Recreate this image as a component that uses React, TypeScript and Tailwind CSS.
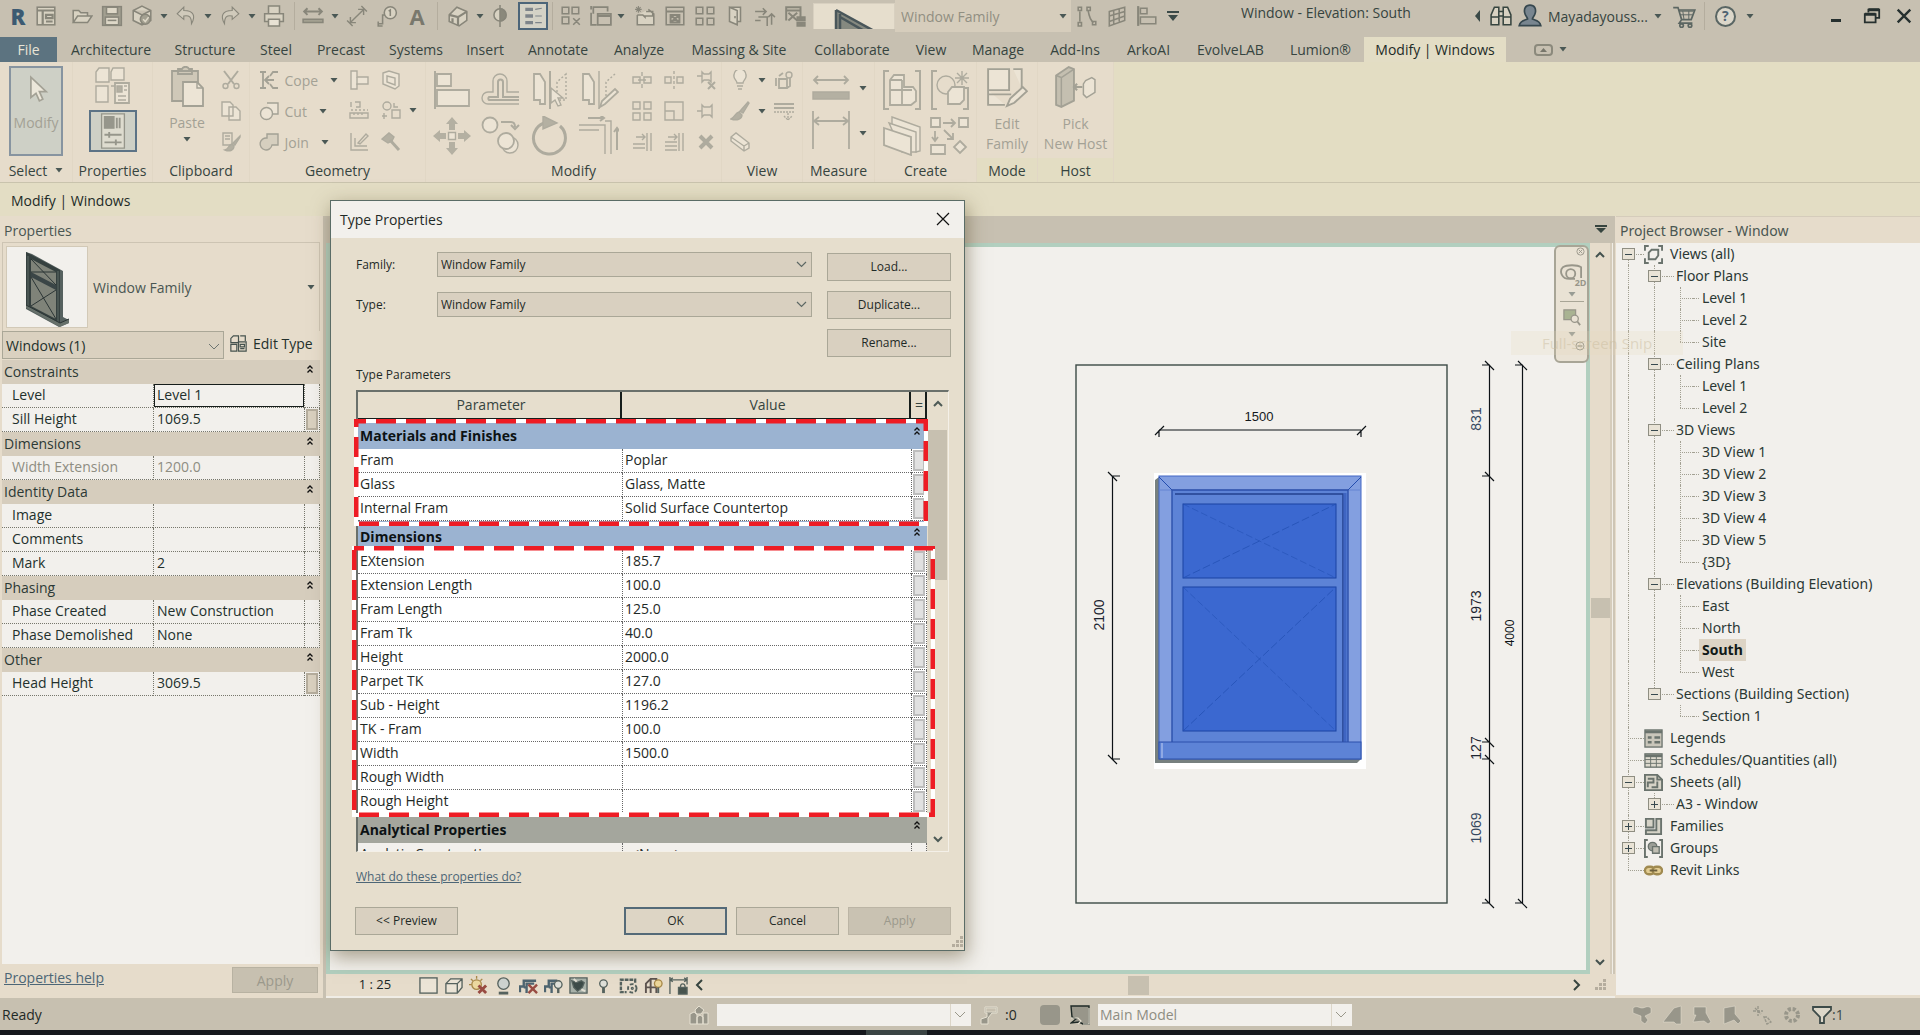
import React from "react";

type Kids = { children?: React.ReactNode };

/* ---------- small drawing helpers ---------- */

function Ico({ s = 20, v = 20, c = "", children }: { s?: number; v?: number; c?: string } & Kids) {
  return (
    <svg
      width={s}
      height={s}
      viewBox={`0 0 ${v} ${v}`}
      className={`shrink-0 ${c}`}
      fill="none"
      stroke="currentColor"
      strokeWidth={1.4}
      aria-hidden="true"
    >
      {children}
    </svg>
  );
}

function Caret({ c = "" }: { c?: string }) {
  return (
    <svg width="8" height="5" viewBox="0 0 8 5" className={`shrink-0 ${c}`} aria-hidden="true">
      <path d="M0.500 0h7L4 4.500z" fill="#4a5855" />
    </svg>
  );
}

function Chevron({ dir, c = "" }: { dir: "up" | "down" | "left" | "right"; c?: string }) {
  const d = { up: "M3 8l4-4 4 4", down: "M3 4l4 4 4-4", left: "M9 1L4 6l5 5", right: "M5 1l5 5-5 5" }[dir];
  return (
    <svg width="14" height="12" viewBox="0 0 14 12" className={`shrink-0 ${c}`} aria-hidden="true">
      <path d={d} fill="none" stroke="currentColor" strokeWidth="2" />
    </svg>
  );
}

function DoubleUp() {
  return (
    <svg width="8" height="10" viewBox="0 0 8 10" className="shrink-0" aria-hidden="true">
      <path d="M1.500 4.500L4 2l2.500 2.500M1.500 8.500L4 6l2.500 2.500" fill="none" stroke="#111" strokeWidth="1.3" />
    </svg>
  );
}

function Grip() {
  return (
    <svg width="12" height="12" viewBox="0 0 12 12" aria-hidden="true">
      <path d="M8 0h3v3H8zM4 4h3v3H4zM8 4h3v3H8zM0 8h3v3H0zM4 8h3v3H4zM8 8h3v3H8z" fill="#b5ad9e" />
    </svg>
  );
}

function WindowModel() {
  return (
    <svg width="80" height="80" viewBox="0 0 80 80" aria-hidden="true">
      <path d="M19 5l6 2 31 17v46l6 3v3l-10 4-33-18z" fill="#56615f" />
      <path d="M19 5l34 18v56L19 61z" fill="#35403f" />
      <path d="M24 12l25 13v47L24 59z" fill="#7f8379" />
      <path d="M21 9v50M51 24v52" stroke="#5f6a67" strokeWidth="1" />
      <path d="M24 25l25 13v5L24 30z" fill="#3a4546" />
      <path d="M24 12l25 26M24 25l25 0M24 30l25 42M24 59l25-16" stroke="#2b3535" strokeWidth="1" />
      <path d="M19 58l34 18 9-4v4l-9 4-34-19z" fill="#66706a" />
      <path d="M19 58l34 18 9-4" fill="none" stroke="#2b3535" strokeWidth="1" />
    </svg>
  );
}

/* ---------- quick access toolbar ---------- */

const P = {
  list: <><rect x="2" y="2" width="16" height="16" fill="#d8d2c2" /><path d="M2 5h16M7 5v13M10 9h6v3h-6zM10 15h6" strokeWidth="2" /></>,
  folder: <path d="M2 16V5h5l2 2h6v3M2 16l4-6h13l-4 6z" fill="#d8d2c2" />,
  save: <><rect x="1.500" y="1.500" width="17" height="17" fill="#a3a091" /><rect x="5" y="2" width="10" height="6" fill="#ded8c8" /><rect x="4" y="11" width="12" height="7" fill="#ded8c8" /><path d="M6 14h8" /></>,
  sync: <><path d="M10 1l8 4v9l-8 4-8-4V5zM2 5l8 4 8-4M10 9v9" fill="#d8d2c2" /><circle cx="13" cy="13" r="4.500" fill="#a3a091" /><path d="M11 13l2 2 3-4" stroke="#ded8c8" /></>,
  undo: <path d="M8 2L2 8l6 5v-3c5-1 7 1 7 7 4-7 2-12-7-12z" fill="#d0cabb" strokeWidth="1" />,
  redo: <path d="M12 2l6 6-6 5v-3c-5-1-7 1-7 7-4-7-2-12 7-12z" fill="#d0cabb" strokeWidth="1" />,
  print: <><path d="M5 8V1h10v7M1.500 8h17v7h-17z" fill="#d8d2c2" /><path d="M5 13h10v6H5z" fill="#e8e2d4" /></>,
  ruler: <><path d="M2 6h16M5 3L2 6l3 3M15 3l3 3-3 3" strokeWidth="1.800" /><path d="M1 13h18v3H1z" fill="#a3a091" /></>,
  dim: <path d="M4 16L16 4M4 11v5h5M11 4h5v5M1 14l5 5M14 1l5 5" strokeWidth="1.300" />,
  tag: <><circle cx="13" cy="7" r="5.500" fill="#d8d2c2" /><path d="M11.500 5.500L13 4.500V10M2 17h4V9h2M2 15v4h4" /></>,
  home: <><path d="M2 9l7-7 9 4v8l-7 5-9-4z" fill="#d8d2c2" /><path d="M2 9l8 2 8-5M10 11v8M5 12v4" strokeWidth="2" /></>,
  section: <><circle cx="10" cy="9" r="5.500" fill="#d8d2c2" /><path d="M10 3.500V0M10 14.500V20M10 3.500a5.500 5.500 0 010 11z" fill="#8b897c" /></>,
  thin: <path d="M3 4h7M3 10h7M3 16h7" strokeWidth="3" />,
  closeh: <path d="M2 2h6v6H2zM11 2h6v6h-6zM2 11h6v6H2zM12 12l6 6M18 12l-6 6" />,
  sw: <path d="M3 8V2h13v4M1 7v11h5M7 8h12v10H7zM7 10h12M1 4v-3" strokeWidth="1.600" />,
  newf: <><path d="M3 9h5l2 2v-1h7V6h-6M3 9v9h15V8l-5-4" fill="#d8d2c2" /><path d="M4 1v6M1 4h6M2 2l4 4M6 2L2 6" strokeWidth="1" /></>,
  win: <><path d="M2 2h16v16H2z" /><path d="M2 6h16M6 9l8 7M14 9l-8 7M6 9h8v7H6z" strokeWidth="1.800" /></>,
  grid4: <path d="M2 2h6v6H2zM12 2h6v6h-6zM2 12h6v6H2zM12 12h6v6h-6z" />,
  door: <path d="M5 2l7 3v13l-7-3zM5 2h10v13h-3M10 10v2" fill="#d8d2c2" />,
  trimq: <path d="M1 6h10M8 3l3 3-3 3M4 11h8v8M16 18V8M13 11l3-3 3 3M1 14h5" />,
  winq: <><path d="M2 14V2h13v9M2 5h13M4 7l8 7M12 7l-8 7" strokeWidth="1.800" /><path d="M12 11h3v3h-3zM16 11h3v3h-3zM12 16h3v3h-3zM16 16h3v3h-3z" fill="#8b897c" /></>,
  node: <path d="M2 2h3v3H2zM10 2h3v3h-3zM15 15h3v3h-3zM2 16h3v3H2zM3.500 6v9M11 5c1 6 2 9 5 11" />,
  curtain: <path d="M3 6l14-4v12L3 19zM7 5v12M12 3.500V15M3 10l14-4M3 15l14-5" />,
  alignq: <><path d="M2 1v18" strokeWidth="2" /><path d="M4 3h6v5H4zM4 11h14v6H4z" /></>,
};

function QBtn({ k, label, ml = "ml-1.5" }: { k: keyof typeof P; label: string; ml?: string }) {
  return (
    <button aria-label={label} className={`flex w-6 shrink-0 items-center justify-center ${ml} text-[#88867a]`}>
      <Ico s={22}>{P[k]}</Ico>
    </button>
  );
}

const Sep = ({ c }: { c: string }) => <span className={`h-7 w-px shrink-0 bg-[#b4ad9e] ${c}`} />;

function TitleBar() {
  return (
    <header className="flex h-[37px] shrink-0 items-start text-[14px] text-[#36443f]">
      <div className="flex h-8 min-w-0 flex-1 items-center">
        <span className="ml-1.5 w-6 shrink-0 text-center text-[22px] leading-8 font-black text-[#3c5a72]">R</span>
        <QBtn k="list" label="Home" ml="ml-1" />
        <QBtn k="folder" label="Open" ml="ml-3" />
        <QBtn k="save" label="Save" />
        <QBtn k="sync" label="Synchronize" />
        <Caret c="ml-1.5" />
        <QBtn k="undo" label="Undo" />
        <Caret c="ml-1.5" />
        <QBtn k="redo" label="Redo" />
        <Caret c="ml-1.5" />
        <QBtn k="print" label="Print" />
        <Sep c="ml-2" />
        <QBtn k="ruler" label="Measure" />
        <Caret c="ml-1.5" />
        <QBtn k="dim" label="Aligned dimension" />
        <QBtn k="tag" label="Tag" />
        <button className="ml-1.5 w-6 shrink-0 text-center text-[22px] leading-7 font-bold text-[#79786d]">A</button>
        <Sep c="ml-2" />
        <QBtn k="home" label="Default 3D view" ml="ml-2" />
        <Caret c="ml-1.5" />
        <QBtn k="section" label="Section" ml="ml-1" />
        <button
          aria-label="Thin lines"
          className="ml-1.5 flex h-7 w-[30px] shrink-0 items-center justify-center border-2 border-[#4c6579] bg-[#d4d2c6] text-[#7d848a]"
        >
          <Ico s={22}>{P.thin}<path d="M12 4l6-1M12 10h6M12 16h6" strokeWidth="1" /></Ico>
        </button>
        <Sep c="ml-1" />
        <QBtn k="closeh" label="Close inactive" />
        <QBtn k="sw" label="Switch windows" />
        <Caret c="ml-1" />
        <QBtn k="newf" label="New family" ml="ml-2" />
        <QBtn k="win" label="Window" />
        <QBtn k="grid4" label="Array" />
        <QBtn k="door" label="Door" />
        <QBtn k="trimq" label="Trim" />
        <QBtn k="winq" label="Window type" />
        <span className="ml-1.5 flex h-[26px] w-[82px] shrink-0 justify-center overflow-hidden border-x border-t border-[#d8d0c0] bg-[#e6decd]">
          <svg width="44" height="24" viewBox="0 0 44 24" className="mt-1" aria-hidden="true">
            <path d="M4 2l40 22H4z" fill="#858980" />
            <path d="M4 2v22M4 2l40 22M8 6v18M8 9l26 15" stroke="#49565a" strokeWidth="2.500" />
          </svg>
        </span>
        <label className="relative flex h-8 w-44 shrink-0 items-center bg-[#d6cdbc]">
          <select aria-label="Family type" className="h-full w-full appearance-none bg-transparent pl-1.5 text-[14px] text-[#918f82]" defaultValue="w">
            <option value="w">Window Family</option>
          </select>
          <Caret c="absolute right-1" />
        </label>
        <QBtn k="node" label="Edit profile" ml="ml-1" />
        <QBtn k="curtain" label="Curtain grid" />
        <QBtn k="alignq" label="Align" />
        <svg width="12" height="10" viewBox="0 0 12 10" className="ml-2 shrink-0" aria-hidden="true">
          <path d="M0 0h12v2H0zM1 4h10L6 10z" fill="#3b4a48" />
        </svg>
      </div>
      <h1 className="h-7 w-[234px] shrink-0 text-[14px] leading-[26px] whitespace-nowrap">Window - Elevation: South</h1>
      <div className="flex h-8 w-[445px] shrink-0 items-center">
        <button aria-label="Collapse search" className="shrink-0">
          <svg width="5" height="12" viewBox="0 0 5 12"><path d="M5 0v12L0 6z" fill="#3b4a48" /></svg>
        </button>
        <button aria-label="Search" className="ml-2.5 text-[#36443f]">
          <Ico s={22}>
            <path d="M1 9l3-7h4v16H1zM19 9l-3-7h-4v16h7zM8 6h4v4H8zM1 11h7M12 11h7" fill="#d8d2c2" />
          </Ico>
        </button>
        <button className="ml-1.5 flex items-center gap-1.5">
          <Ico s={24} c="text-[#36474e]">
            <path d="M10 1c4 0 5 3 4.500 6S12 11 12 12.500c2 1 6 1 7 5.500H1c1-4.500 5-4.500 7-5.500C8 11 6 10 5.500 7S6 1 10 1z" fill="#78858f" />
          </Ico>
          <span>Mayadayouss...</span>
        </button>
        <Caret c="ml-1.5" />
        <button aria-label="Cart" className="ml-2.5 text-[#5c6662]">
          <Ico s={24}>
            <path d="M1 3h4l3 10h8l3-8H6M8 13l-2 3h11" />
            <path d="M6 6h12M7 9h10M9 6l1 7M14 6v7" strokeWidth="0.800" />
            <circle cx="8" cy="18" r="1.500" /><circle cx="15" cy="18" r="1.500" />
          </Ico>
        </button>
        <Sep c="ml-2" />
        <button aria-label="Help" className="ml-2.5 flex size-[21px] shrink-0 items-center justify-center rounded-full border-2 border-[#5a6664] bg-[#dcd7ca] text-[14px] leading-4 font-bold text-[#4f6472]">
          ?
        </button>
        <Caret c="ml-2.5" />
        <span className="flex-1" />
        <button aria-label="Minimize" className="flex h-5 w-4 items-end pb-1"><span className="h-[3px] w-2.5 bg-[#26302f]" /></button>
        <button aria-label="Restore" className="ml-4 text-[#26302f]">
          <Ico s={18}><path d="M6 6V3h12v9h-3M2 8h12v9H2z" strokeWidth="2" /><path d="M6 3h12M2 8h12" strokeWidth="3.500" /></Ico>
        </button>
        <button aria-label="Close" className="mr-[7px] ml-3.5 text-[#26302f]">
          <Ico s={18}><path d="M3 3l14 14M17 3L3 17" strokeWidth="2.600" /></Ico>
        </button>
      </div>
    </header>
  );
}

/* ---------- ribbon ---------- */

const TABS: [string, string][] = [
  ["Architecture", "w-[104px]"], ["Structure", "w-[84px]"], ["Steel", "w-[58px]"], ["Precast", "w-[72px]"],
  ["Systems", "w-[78px]"], ["Insert", "w-[60px]"], ["Annotate", "w-[86px]"], ["Analyze", "w-[76px]"],
  ["Massing & Site", "w-[124px]"], ["Collaborate", "w-[102px]"], ["View", "w-[56px]"], ["Manage", "w-[78px]"],
  ["Add-Ins", "w-[76px]"], ["ArkoAI", "w-[71px]"], ["EvolveLAB", "w-[93px]"], ["Lumion®", "w-[87px]"],
];

function Tabs() {
  return (
    <nav className="flex h-[25px] shrink-0 items-stretch text-[14px] leading-[25px] whitespace-nowrap text-[#36443f]">
      <button className="w-[57px] bg-[#5c7380] text-[#e9e4d6]">File</button>
      <span className="w-0.5" />
      {TABS.map(([t, w]) => (
        <button key={t} className={`${w} shrink-0`}>{t}</button>
      ))}
      <button className="w-[142px] shrink-0 bg-[#e3ddc5] text-[#1d2b27]">Modify | Windows</button>
      <button aria-label="Ribbon display" className="ml-7 flex items-center gap-1.5">
        <span className="flex h-3 w-[19px] items-center justify-center rounded border-2 border-[#8b897c]">
          <svg width="7" height="4" viewBox="0 0 7 4"><path d="M0 4h7L3.500 0z" fill="#77766b" /></svg>
        </span>
        <Caret />
      </button>
    </nav>
  );
}

function Panel({ w, label, tint, children }: { w: string; label: React.ReactNode; tint?: boolean } & Kids) {
  return (
    <section className={`flex shrink-0 flex-col border-r border-[#e1d7c5] bg-[#e6dccb] ${w}`}>
      <div className="flex h-24 justify-center pt-1">{children}</div>
      <h2 className={`flex h-6 items-center justify-center text-[14px] text-[#36443f] ${tint ? "bg-[#e3ddc3]" : ""}`}>{label}</h2>
    </section>
  );
}

function Stack({ w = "w-5", gap = "gap-[11px]", children }: { w?: string; gap?: string } & Kids) {
  return <div className={`flex shrink-0 flex-col items-center pt-1 ${gap} ${w}`}>{children}</div>;
}

function Tool({ label, big, children }: { label: string; big?: boolean } & Kids) {
  return (
    <button aria-label={label} className="shrink-0 text-[#aeab9e]">
      <Ico s={big ? 40 : 20} v={big ? 40 : 20}>{children}</Ico>
    </button>
  );
}

function TextTool({ label, children }: { label: string } & Kids) {
  return (
    <button className="flex h-5 items-center text-[14px] text-[#a3a195]">
      <Ico>{children}</Ico>
      <span className="mr-3 ml-1.5">{label}</span>
      <Caret />
    </button>
  );
}

const F = "#ece4d5";
const G = "#b4b0a2";

function Ribbon() {
  return (
    <div className="flex h-[121px] shrink-0 overflow-hidden border-b border-[#c9c3ad] bg-[#e3ddc3]">
      <Panel w="w-[73px]" label={<>Select <Caret c="ml-2" /></>}>
        <button className="flex h-[90px] w-[54px] flex-col items-center border-2 border-[#8794a0] bg-[#ced0c6] pt-1 text-[14px] text-[#a3a195]">
          <Ico s={34}><path d="M7 3v12l3-2.500 2 4.500 2-1-2-4.500h4z" fill="#ece7da" strokeWidth="1" /></Ico>
          <span className="mt-1.5">Modify</span>
        </button>
      </Panel>
      <Panel w="w-20" label="Properties">
        <div className="flex flex-col items-center gap-1">
          <Tool label="Type properties" big>
            <path d="M6 2h10v14H3V6zM20 2h11v12H18V6zM3 20h12v16H3zM16 16v-4M18 20h6" fill={F} />
            <path d="M22 17h14v20H22z" fill={F} strokeWidth="1.800" />
            <path d="M24 20h5v6h-5z" fill={G} /><path d="M31 20h3M31 24h3M25 30h8M25 34h8" />
          </Tool>
          <button aria-label="Properties palette" className="flex h-[42px] w-12 items-center justify-center border-2 border-[#5c7386] bg-[#ced0c6] text-[#96968b]">
            <Ico s={38} v={40}>
              <path d="M8 2h24v36H8z" fill="#dedccf" />
              <path d="M11 5h10v12H11z" fill="#96968b" />
              <path d="M24 6v11M27 6v11M11 24h18M16 21v6M11 32h18M23 29v6" strokeWidth="2" />
            </Ico>
          </button>
        </div>
      </Panel>
      <Panel w="w-[97px]" label="Clipboard">
        <span className="w-1.5" />
        <button className="flex w-10 flex-col items-center text-[14px] text-[#a3a195]">
          <Ico s={42} v={42}>
            <path d="M6 5h26v30H6zM12 8V3h4c1-3 6-3 7 0h3v5z" fill="#cfc8b8" strokeWidth="1.800" />
            <path d="M17 16h14l6 6v18H17z" fill={F} strokeWidth="1.800" /><path d="M31 16v6h6" />
          </Ico>
          <span className="mt-1">Paste</span>
          <Caret c="mt-1" />
        </button>
        <span className="w-3.5" />
        <Stack>
          <Tool label="Cut"><path d="M3 1l10 13M17 1L7 14" strokeWidth="2" /><circle cx="4.500" cy="16" r="2.500" /><circle cx="15.500" cy="16" r="2.500" /></Tool>
          <Tool label="Copy"><path d="M1 1h8l3 3v11H1zM8 6h7l4 4v9H8z" fill={F} /></Tool>
          <Tool label="Match type"><path d="M2 1h9v12H2zM4 4h5M4 7h5" /><path d="M19 4l-7 7 2 2 5-8zM11 12c-4 1-3 5-7 6 5 2 9 0 9-4z" fill={G} /></Tool>
        </Stack>
      </Panel>
      <Panel w="w-44" label="Geometry">
        <div className="flex w-[90px] flex-col gap-[11px] pt-1">
          <TextTool label="Cope"><path d="M1 2h6M4 2v16M1 18h6M7 10h8M10 6l-4 4 4 4M19 2h-5l-3 4M19 18h-5l-3-4" strokeWidth="1.800" /></TextTool>
          <TextTool label="Cut"><path d="M8 2h11v11h-5" fill={F} /><circle cx="7.500" cy="12.500" r="6" fill={F} /></TextTool>
          <TextTool label="Join"><path d="M8 2h11v11h-6a6 6 0 11-5-7z" fill="#d6cfbf" /></TextTool>
        </div>
        <Stack>
          <Tool label="Wall joins"><path d="M2 1h6v6h11v7H8v5H2z" fill={F} /><path d="M8 7v8" /></Tool>
          <Tool label="Split face"><path d="M2 1v5M6 1h5v5H7M1 12h18v5H1zM5 12v2M9 12v2M13 12v2" /><path d="M2 9h17" strokeDasharray="2 2" /></Tool>
          <Tool label="Demolish lines"><path d="M2 1v17h17M6 6v8h12M9 11l8-9 2 2-8 8z" /></Tool>
        </Stack>
        <span className="w-3" />
        <Stack>
          <Tool label="Paint"><path d="M2 3l6-2 10 3v12l-4 3L2 14zM6 6l8 2v7l-8-3z" fill={F} /></Tool>
          <Tool label="Switch geometry"><circle cx="6" cy="5" r="4" /><path d="M11 9h8v8h-8zM3 12v6M1 15h5M13 2v4h4" /></Tool>
          <Tool label="Hammer"><path d="M1 7l7-6 5 4-2 4-4 2z" fill={G} /><path d="M9 8l9 10" strokeWidth="3" /></Tool>
        </Stack>
        <Caret c="mt-[42px] ml-2" />
      </Panel>
      <Panel w="w-[296px]" label="Modify">
        <div className="grid grid-cols-[repeat(4,40px)] grid-rows-2 gap-x-[9px] gap-y-0.5 pt-0.5">
          <Tool label="Align" big><path d="M3 1v38" strokeWidth="2" /><path d="M5 4h14v12H5zM5 20h32v16H5z" fill={F} strokeWidth="1.800" /></Tool>
          <Tool label="Offset" big><path d="M38 22H26V11a6 6 0 00-14 0v11H7a5 5 0 000 12h31" /><path d="M38 27H22V12a2 2 0 00-5 0v15H8a2 2 0 000 3h30" strokeWidth="2" /></Tool>
          <Tool label="Mirror pick axis" big><path d="M4 4h6l5 8v22h-5V30H4z" fill={F} strokeWidth="1.800" /><path d="M20 1v38" strokeWidth="2" /><path d="M36 4l-9 8v22h3v-4h6z" strokeDasharray="2 2" /><path d="M21 18v15l4-3 3 6 3-1-3-7h5z" fill={F} /></Tool>
          <Tool label="Mirror draw axis" big><path d="M4 4h6l5 8v22h-5V30H4z" fill={F} strokeWidth="1.800" /><path d="M20 1v38" /><path d="M36 4l-9 8v18" strokeDasharray="2 2" /><path d="M21 37l2-6 13-12 3 3-13 12z" fill={F} strokeWidth="1.800" /></Tool>
          <Tool label="Move" big><path d="M20 1l6 7h-3v6h-6V8h-3zM20 39l6-7h-3v-6h-6v6h-3zM1 20l7-6v3h6v6H8v3zM39 20l-7-6v3h-6v6h6v3z" fill={G} stroke="none" /><path d="M16.500 16.500h7v7h-7z" fill={F} /></Tool>
          <Tool label="Copy element" big><circle cx="9" cy="9" r="7.500" fill={F} strokeWidth="1.800" /><path d="M20 6h10c3 0 4 2 4 5M30 9l4 4 4-4" strokeWidth="2" /><circle cx="29" cy="29" r="8" fill={F} /><circle cx="25" cy="25" r="8" fill={F} strokeWidth="1.800" /></Tool>
          <Tool label="Rotate" big><path d="M14 7a16 16 0 1016 3" strokeWidth="3" /><path d="M13 0l14 7-14 6z" fill={G} /></Tool>
          <Tool label="Trim" big><path d="M0 9h26v29M0 14h20M26 5h6v33" /><path d="M9 2h16M21-1l4 3-4 3M38 34V12M35 16l3-4 3 4" strokeWidth="2" /></Tool>
        </div>
        <span className="w-[13px]" />
        <div className="grid grid-cols-[repeat(3,20px)] grid-rows-[repeat(3,20px)] gap-x-3 gap-y-[11px] pt-1">
          <Tool label="Split"><path d="M1 7h7v6H1zM12 7h7v6h-7zM6 10h8M10 2v4M10 14v4" /></Tool>
          <Tool label="Split gap"><path d="M1 7h6v6H1zM13 7h6v6h-6z" /><path d="M10 1v18" strokeDasharray="3 2" /></Tool>
          <Tool label="Unpin"><path d="M1 6h5M6 2l2 2h5l2-2v10l-2-2H8l-2 2z" /><path d="M12 12l7 7M19 12l-7 7" strokeWidth="2" /></Tool>
          <Tool label="Array"><path d="M1 1h7v7H1zM12 1h7v7h-7zM1 12h7v7H1zM12 12h7v7h-7z" /></Tool>
          <Tool label="Scale"><path d="M1 1h18v18H1zM1 10h9v9" /></Tool>
          <Tool label="Pin"><path d="M1 10h5M6 4l2 2h6l2-2v12l-2-2H8l-2 2z" /></Tool>
          <Tool label="Trim single"><path d="M1 12h12M1 16h12M15 1v18M19 1v18M4 5h9M10 2l3 3-3 3" /></Tool>
          <Tool label="Trim multiple"><path d="M1 10h12M1 14h12M1 18h12M15 1v18M19 1v18M4 5h9M10 2l3 3-3 3" /></Tool>
          <Tool label="Delete"><path d="M4 4l12 12M16 4L4 16" strokeWidth="4" /></Tool>
        </div>
      </Panel>
      <Panel w="w-[81px]" label="View">
        <Stack>
          <Tool label="Hide in view"><path d="M7 13c0-3-4-4-3-8a6 6 0 0112 0c1 4-3 5-3 8zM7 16h6M8 19h4" fill={F} /></Tool>
          <Tool label="Override graphics"><path d="M18 1l-8 9 3 2 6-10zM9 11c-4 1-4 5-8 7 6 2 11 0 11-4z" fill={G} /></Tool>
          <Tool label="Selection box"><path d="M1 5l5-4 13 10v5l-5 3L1 9zM1 5l13 9v5M14 14l5-3" fill={F} /></Tool>
        </Stack>
        <div className="flex w-5 flex-col items-center pl-1"><Caret c="mt-3" /><Caret c="mt-[26px]" /></div>
        <span className="w-1" />
        <Stack>
          <Tool label="Displace"><path d="M5 9h8v9H5zM2 8v8M5 6l4-3M16 8v8l-3 2" strokeWidth="1.800" /><circle cx="15" cy="5" r="3" /></Tool>
          <Tool label="Linework"><path d="M0 3h20M0 7h20" strokeWidth="2" /><path d="M0 11h20M14 12v7M10 15l4 4 4-4" strokeDasharray="2 1" /></Tool>
        </Stack>
      </Panel>
      <Panel w="w-[72px]" label="Measure">
        <div className="flex flex-col gap-0.5 pt-0.5">
          <Tool label="Measure distance" big><path d="M3 12h34M7 8l-4 4 4 4M33 8l4 4-4 4" strokeWidth="1.800" /><path d="M2 24h36v7H2z" fill={G} /></Tool>
          <Tool label="Aligned" big><path d="M2 1v38M38 1v38M2 11h36M8 7l-5 4 5 4M32 7l5 4-5 4" strokeWidth="1.800" /></Tool>
        </div>
        <div className="ml-2 flex flex-col"><Caret c="mt-5" /><Caret c="mt-10" /></div>
      </Panel>
      <Panel w="w-[102px]" label="Create">
        <div className="grid grid-cols-[repeat(2,40px)] grid-rows-2 gap-x-2 gap-y-0.5 pt-0.5">
          <Tool label="Create assembly" big><path d="M7 1H2v38h5M33 1h5v38h-5" strokeWidth="2" /><path d="M8 10l4-5h10v12h9l3 4v10l-5 4H8zM8 20h22M20 10v24M8 10h12" fill={F} strokeWidth="1.800" /></Tool>
          <Tool label="Create group" big><path d="M7 1H2v38h5M33 18h5v21h-5" strokeWidth="2" /><circle cx="16" cy="15" r="9" /><path d="M18 22l4-5h12v13l-4 4H18z" fill={F} strokeWidth="1.800" /><path d="M32 1v14M25 8h14M27 3l10 10M37 3L27 13" /></Tool>
          <Tool label="Create parts" big><path d="M10 1l28 10v24l-4 1L10 24z" fill={F} /><path d="M7 7l27 9v20H20z" fill={F} /><path d="M2 12l27 9v18L2 29z" fill={F} strokeWidth="1.800" /></Tool>
          <Tool label="Create similar" big><path d="M1 2h9v9H1zM29 2h9v9h-9zM1 29h14v9H1zM30 25l6 6-6 6-6-6z" fill={F} strokeWidth="1.800" /><path d="M13 7h12M21 3l4 4-4 4M5 15v10M2 21l3 4 3-4M14 14l9 9M23 17v6h-6" strokeWidth="1.800" /></Tool>
        </div>
      </Panel>
      <Panel w="w-[61px]" label="Mode" tint>
        <button className="flex flex-col items-center text-[14px] leading-5 text-[#a3a195]">
          <Ico s={42} v={40}><path d="M2 3h20v20H2zM26 3h8v18M2 27h22M2 23v14h16" fill={F} strokeWidth="1.800" /><path d="M20 38l3-7 12-11 4 4-12 11z" fill={F} strokeWidth="1.800" /></Ico>
          <span className="mt-1.5">Edit</span><span>Family</span>
        </button>
      </Panel>
      <Panel w="w-[76px]" label="Host" tint>
        <button className="flex flex-col items-center text-[14px] leading-5 whitespace-nowrap text-[#a3a195]">
          <Ico s={42} v={40}><path d="M2 9L14 1l5 2v30L7 39l-5-2z" fill="#c4bfb0" strokeWidth="1.800" /><path d="M7 11l12-8M7 11v28M2 9l5 2" /><path d="M30 14l6-3 3 2v12l-8 5-3-3V17z" fill={F} /><path d="M27 20h-8M22 17l-3 3 3 3" strokeWidth="2" /></Ico>
          <span className="mt-1.5">Pick</span><span>New Host</span>
        </button>
      </Panel>
    </div>
  );
}

/* ---------- properties palette ---------- */

type PRow = { h?: string; n?: string; v?: string; btn?: boolean; off?: boolean; active?: boolean };
const PROPS: PRow[] = [
  { h: "Constraints" }, { n: "Level", v: "Level 1", active: true }, { n: "Sill Height", v: "1069.5", btn: true },
  { h: "Dimensions" }, { n: "Width Extension", v: "1200.0", off: true },
  { h: "Identity Data" }, { n: "Image", v: "" }, { n: "Comments", v: "" }, { n: "Mark", v: "2" },
  { h: "Phasing" }, { n: "Phase Created", v: "New Construction" }, { n: "Phase Demolished", v: "None" },
  { h: "Other" }, { n: "Head Height", v: "3069.5", btn: true },
];

function PropertiesPalette() {
  return (
    <aside className="flex w-[323px] shrink-0 flex-col bg-[#e6dccb] pt-0.5 pr-[3px] pl-0.5 text-[14px] text-[#23302c]">
      <h2 className="h-6 pl-0.5 leading-[26px] text-[#4a5652]">Properties</h2>
      <div className="flex h-[89px] items-center border border-b-0 border-[#cdc4b3] pl-[3px]">
        <div className="border border-[#d2c9b7] bg-[#f2f0ec]"><WindowModel /></div>
        <span className="flex-1 pl-[5px] text-[#4a5652]">Window Family</span>
        <Caret c="mr-1" />
      </div>
      <div className="flex h-[29px] items-start">
        <label className="relative h-7 w-[222px] border border-[#aaa797] bg-[#dad1c0]">
          <select aria-label="Filter" className="h-full w-full appearance-none bg-transparent pl-[3px]" defaultValue="w">
            <option value="w">Windows (1)</option>
          </select>
          <svg width="10" height="6" viewBox="0 0 10 6" className="absolute top-3 right-1"><path d="M0 0l5 5 5-5" fill="none" stroke="#6c7571" /></svg>
        </label>
        <button className="ml-1.5 flex h-6 items-center gap-1.5 whitespace-nowrap">
          <Ico s={17} c="text-[#46534f]"><path d="M4 1h6v8H1V4zM12 1h6v6M1 11h7v8H1zM10 4v5" /><path d="M10 8h9v11h-9zM12 11h5v3h-5zM12 16h5" /></Ico>
          Edit Type
        </button>
      </div>
      <table className="w-full table-fixed border-separate border-spacing-0">
        <colgroup><col /><col className="w-[151px]" /><col className="w-4" /></colgroup>
        <tbody>
          {PROPS.map((r, i) =>
            r.h ? (
              <tr key={i} className="h-6 bg-[#d6cdbd]">
                <th colSpan={2} className="pl-0.5 text-left leading-6 font-normal text-[#2c3935]">{r.h}</th>
                <td className="align-top"><button aria-label={`Collapse ${r.h}`} className="mt-1 ml-0.5 block"><DoubleUp /></button></td>
              </tr>
            ) : (
              <tr key={i} className={`h-6 bg-[#f2f0ec] align-top ${r.off ? "text-[#8e8d82]" : ""}`}>
                <th className="border-b border-dotted border-[#77776c] pl-2.5 text-left leading-[22px] font-normal whitespace-nowrap">{r.n}</th>
                <td className={`border-b border-l border-dotted border-[#77776c] leading-[22px] whitespace-nowrap ${r.active ? "p-0" : "pl-[3px]"}`}>
                  {r.active ? (
                    <input aria-label={r.n} defaultValue={r.v} className="block h-[23px] w-full border border-[#161d1b] bg-transparent px-0.5 pb-0.5 outline-none" />
                  ) : (
                    r.v
                  )}
                </td>
                <td className="border-x border-b border-dotted border-[#77776c] p-px">
                  {r.btn && <button aria-label={`${r.n} link`} className="block h-[21px] w-full border-2 border-[#b5ad9d] bg-[#d9d0bf]" />}
                </td>
              </tr>
            ),
          )}
        </tbody>
      </table>
      <div className="flex-1 bg-[#f2f0ec]" />
      <div className="flex h-[34px] items-start justify-between px-0.5 pt-[3px]">
        <a href="#help" className="leading-[22px] text-[#4d6676] underline">Properties help</a>
        <button disabled className="h-[26px] w-[86px] border border-[#b8b2a2] bg-[#c7c0b0] text-[#9b998c]">Apply</button>
      </div>
    </aside>
  );
}

/* ---------- elevation drawing ---------- */

function VText({ x, y, s = 14, f = "#1c2430", children }: { x: number; y: number; s?: number; f?: string } & Kids) {
  return (
    <text transform={`translate(${x} ${y}) rotate(-90)`} textAnchor="middle" fontSize={s} fill={f} stroke="none">
      {children}
    </text>
  );
}

function Elevation() {
  return (
    <svg
      viewBox="330 248 1256 722"
      preserveAspectRatio="xMaxYMin meet"
      className="block h-full w-full font-['Liberation_Sans',sans-serif]"
      role="img"
      aria-label="South elevation of the window"
    >
      <rect x="1076" y="366" width="371" height="538" fill="none" stroke="#3d4a46" strokeWidth="1.400" />
      <rect x="1154" y="474" width="212" height="296" fill="#fff" />
      <path d="M1155 481l4-3h3v282h199l-4 4h-202z" fill="#77807f" />
      <rect x="1159" y="477" width="202" height="283" fill="#839fe0" stroke="#4267c4" />
      <path d="M1159 491h202" stroke="#6484d2" />
      <path d="M1159 478l13 13M1361 478l-13 13" stroke="#234cae" />
      <rect x="1172" y="491" width="176" height="253" fill="#5d83d6" />
      <path d="M1172 744V491h176v253" fill="none" stroke="#2c50ab" strokeWidth="1.400" />
      <path d="M1175 495h168v249" fill="none" stroke="#23418f" strokeWidth="1.500" />
      <path d="M1345 494v250" stroke="#3f65c2" strokeWidth="3" />
      <rect x="1159" y="743" width="202" height="17" fill="#5d83d6" stroke="#2c50ab" />
      <path d="M1162 744v15" stroke="#8fa9e4" strokeWidth="2" />
      <g fill="#3b68d0" stroke="#1b43a2">
        <rect x="1183" y="505" width="153" height="74" />
        <rect x="1183" y="588" width="153" height="144" />
      </g>
      <g stroke="#2350b4" strokeWidth="0.800">
        <path d="M1183 505l153 74M1183 588l153 144" strokeDasharray="7 3" opacity="0.700" />
        <path d="M1183 579l153-74M1183 732l153-144" strokeDasharray="8 3" />
      </g>
      <g stroke="#0d1216" strokeWidth="1.200" fill="none">
        <path d="M1159 431h202M1112.500 477v283M1489.500 366v538M1522.500 366v538" />
        {[1159, 1361].map((x) => <path key={x} d={`M${x} 431v7M${x - 4} 436l9-9`} />)}
        {[477, 760].map((y) => <path key={y} d={`M1112 ${y}h8M1108 ${y - 4}l9 9`} />)}
        {[366, 477, 743, 760, 904].map((y) => <path key={y} d={`M1482 ${y}h8M1485 ${y - 4}l9 9`} />)}
        {[366, 904].map((y) => <path key={y} d={`M1515 ${y}h8M1518 ${y - 4}l9 9`} />)}
      </g>
      <text x="1259" y="422" fontSize="13" textAnchor="middle" fill="#14191c">1500</text>
      <VText x={1104} y={616}>2100</VText>
      <VText x={1481} y={420} f="#37485e">831</VText>
      <VText x={1481} y={607}>1973</VText>
      <VText x={1481} y={749}>127</VText>
      <VText x={1481} y={829} f="#37485e">1069</VText>
      <VText x={1514} y={634} s={12} f="#0d1216">4000</VText>
    </svg>
  );
}

function NavigationBar() {
  return (
    <div className="absolute -top-0.5 -right-[3px] flex h-[118px] w-[35px] flex-col items-center rounded-md border-2 border-[#a8a596] bg-[#e9e2d4] text-[#98968a]">
      <button aria-label="Close navigation bar" className="mr-0.5 self-end"><Ico s={9}><circle cx="10" cy="10" r="8" strokeWidth="2" /><path d="M6 6l8 8M14 6l-8 8" strokeWidth="2" /></Ico></button>
      <button aria-label="Steering wheel" className="relative mt-1.5">
        <Ico s={26}><path d="M3 4c3-2 11-2 14 0v9H8C2 13 0 7 3 4z" /><circle cx="9" cy="9" r="3.500" /></Ico>
        <span className="absolute -right-0.5 bottom-0 bg-[#e9e2d4] text-[9px] leading-[10px] font-bold">2D</span>
      </button>
      <Caret c="mt-1 opacity-50" />
      <span className="mt-1 h-px w-6 bg-[#a8a596]" />
      <button aria-label="Zoom region" className="mt-1.5"><Ico s={18}><path d="M1 2h13v11H1z" fill="#a9b392" /><circle cx="13" cy="12" r="4" fill="#e9e2d4" /><path d="M16 15l3 4" strokeWidth="2" /></Ico></button>
      <Caret c="mt-1.5 opacity-50" />
      <button aria-label="Options" className="mt-1 mr-0.5 self-end"><Ico s={10}><circle cx="10" cy="10" r="8" strokeWidth="2" /><path d="M5 10h10" strokeWidth="3" /></Ico></button>
    </div>
  );
}

const VIEW_TOOLS: [string, React.ReactNode][] = [
  ["Detail level", <rect x="1" y="2" width="18" height="16" fill="#ebe4d6" />],
  ["Visual style", <path d="M2 8l5-5h12v9l-5 6H2zM2 8h12v10M14 8l5-5" fill="#ebe4d6" />],
  ["Sun path", <><circle cx="8" cy="9" r="5" fill="#ecd9a0" stroke="#a8894a" /><path d="M8 0v3M0 9h3M2 3l2 2M14 3l-2 2" stroke="#a8894a" /><path d="M10 10l8 8M18 10l-8 8" stroke="#984b42" strokeWidth="3" /></>],
  ["Shadows", <><circle cx="10" cy="8" r="6" fill="#ccd2cf" /><path d="M5 18h10" strokeWidth="3" /></>],
  ["Crop view", <><path d="M1 17v-6h4V5h13M5 12h4M8 18V8h8" stroke="#4d6470" strokeWidth="2.500" /><path d="M10 9l9 9M19 9l-9 9" stroke="#984b42" strokeWidth="2.500" /></>],
  ["Show crop", <><path d="M1 17v-6h4V5h9M5 12h4M8 18V8h5" stroke="#4d6470" strokeWidth="2.500" /><circle cx="15" cy="9" r="4" fill="#dfe0d9" /><path d="M15 13v5" strokeWidth="2.500" /></>],
  ["Lock view", <><path d="M1 2h18v16H1z" fill="#a8b1a9" /><path d="M3 5l5 2 5-2 3 2-2 5-5 4-4-4z" fill="#3c4b48" /><path d="M5 3l3 3M13 14l4 2" stroke="#e2dfd4" strokeWidth="2" /></>],
  ["Temporary hide", <><circle cx="10" cy="8" r="4" fill="#dfe0d9" /><path d="M10 12v6" strokeWidth="3" /></>],
  ["Reveal hidden", <><path d="M17 7V4H2v13h6" strokeWidth="2.500" strokeDasharray="4 1" /><circle cx="14" cy="13" r="4.500" strokeDasharray="4 2" strokeWidth="2" /><circle cx="14" cy="13" r="1" /></>],
  ["Temporary properties", <><path d="M2 18V8l5-5h6v15M2 12h11M7 3v15" stroke="#5d5450" strokeWidth="2" /><circle cx="15" cy="8" r="4" fill="#ecd69a" stroke="#a8894a" /><path d="M15 12v6" strokeWidth="2" /></>],
  ["Reveal constraints", <><path d="M1 1v18M19 1v8M1 4h18M4 2L1 4l3 2M16 2l3 2-3 2" /><path d="M10 12h9v7h-9z" fill="#48544e" /><path d="M12 12c0-5 5-5 5 0" /></>],
];

function DrawingArea() {
  return (
    <main className="flex min-w-0 flex-1 flex-col border-l-[3px] border-[#c7c0b1] bg-[#c7c0b1]">
      <div className="flex h-[27px] shrink-0 items-center justify-end pr-2">
        <button aria-label="Open views">
          <svg width="12" height="9" viewBox="0 0 12 9"><path d="M0 0h12v2H0zM1 3h10L6 8z" fill="#36443f" /></svg>
        </button>
      </div>
      <div className="flex min-h-0 flex-1 bg-[#e6dccb]">
        <div className="relative min-w-0 flex-1 border-4 border-[#b2cfbf] bg-[#f2f0ec]">
          <Elevation />
          <NavigationBar />
          <span className="absolute top-[84px] right-[-97px] z-10 w-[172px] bg-[#e6d7bb]/20 text-center text-[15px] leading-6 whitespace-nowrap text-[#cbbd9f]/50">
            Full-screen Snip
          </span>
        </div>
        <div className="flex w-5 shrink-0 flex-col items-center py-1.5 text-[#44524f]">
          <Chevron dir="up" />
          <span className="grow-[337]" />
          <span className="h-5 w-[19px] bg-[#c7c0b0]" />
          <span className="grow-[338]" />
          <Chevron dir="down" />
        </div>
        <span className="w-[5px] border-x-2 border-l-[#d5ccbb] border-r-[#cdc5b5] bg-[#f0ede6]" />
      </div>
      <div className="flex h-6 shrink-0 items-center border-b-2 border-[#f0ede6] bg-[#e6dccb] pr-2 text-[#55625e]">
        <button className="w-[90px] shrink-0 pl-2 text-center text-[13px] text-[#1c2725]">1 : 25</button>
        {VIEW_TOOLS.map(([t, g]) => (
          <button key={t} aria-label={t} className="flex w-[25px] shrink-0 items-center justify-center"><Ico s={19}>{g}</Ico></button>
        ))}
        <Chevron dir="left" c="ml-0.5 text-[#36443f]" />
        <span className="grow-[422]" />
        <span className="h-[19px] w-[21px] bg-[#c7c0b0]" />
        <span className="grow-[422]" />
        <Chevron dir="right" c="mr-3 text-[#36443f]" />
        <Grip />
      </div>
    </main>
  );
}

/* ---------- project browser ---------- */

type Node = { d: number; t: string; box?: "-" | "+"; last?: boolean; icon?: React.ReactNode; sel?: boolean; bars?: boolean[] };

const TREE: Node[] = [
  { d: 0, t: "Views (all)", box: "-", icon: <><path d="M5 1H1v5M15 1h4v5M5 19H1v-5M15 19h4v-5" strokeWidth="2" /><path d="M5 8l3-3h7v6l-3 4H5z" strokeWidth="2" /></> },
  { d: 1, t: "Floor Plans", box: "-" }, { d: 2, t: "Level 1" }, { d: 2, t: "Level 2" }, { d: 2, t: "Site", last: true },
  { d: 1, t: "Ceiling Plans", box: "-" }, { d: 2, t: "Level 1" }, { d: 2, t: "Level 2", last: true },
  { d: 1, t: "3D Views", box: "-" }, { d: 2, t: "3D View 1" }, { d: 2, t: "3D View 2" }, { d: 2, t: "3D View 3" },
  { d: 2, t: "3D View 4" }, { d: 2, t: "3D View 5" }, { d: 2, t: "{3D}", last: true },
  { d: 1, t: "Elevations (Building Elevation)", box: "-" }, { d: 2, t: "East" }, { d: 2, t: "North" },
  { d: 2, t: "South", sel: true }, { d: 2, t: "West", last: true },
  { d: 1, t: "Sections (Building Section)", box: "-", last: true }, { d: 2, t: "Section 1", last: true, bars: [true, false] },
  { d: 0, t: "Legends", icon: <><rect x="1" y="1" width="18" height="18" fill="#c9c6ba" /><path d="M1 3h18" strokeWidth="3" /><path d="M4 9h4M4 14h4M11 9h6M11 14h6" strokeWidth="2.500" /></> },
  { d: 0, t: "Schedules/Quantities (all)", icon: <><rect x="1" y="3" width="18" height="14" fill="#dedace" /><path d="M1 5h18" strokeWidth="3" /><path d="M1 9h18M1 13h18M7 6v11M13 6v11" strokeWidth="1" /></> },
  { d: 0, t: "Sheets (all)", box: "-", icon: <><path d="M1 2h13l5 5v11H1z" fill="#d6d3c7" strokeWidth="2" /><path d="M4 6h6v4H4v5M8 15h6V9M14 2v5h5" strokeWidth="2" /></> },
  { d: 1, t: "A3 - Window", box: "+", last: true },
  { d: 0, t: "Families", box: "+", icon: <path d="M2 2h8v9H2zM13 2h5v16H2v-4h11z" fill="#d6d3c7" strokeWidth="2" /> },
  { d: 0, t: "Groups", box: "+", icon: <><path d="M4 1H1v18h3M16 1h3v18h-3" strokeWidth="2" /><circle cx="9" cy="8" r="4.500" fill="#9b9e96" /><path d="M9 8h7v7H9z" fill="#c1bfb3" /></> },
  { d: 0, t: "Revit Links", last: true, icon: <><rect x="1" y="6" width="10" height="8" rx="4" fill="#e3cd92" stroke="#a08a50" strokeWidth="2.500" /><rect x="9" y="6" width="10" height="8" rx="4" fill="#e3cd92" stroke="#a08a50" strokeWidth="2.500" /><path d="M6 10h8" stroke="#6d5f3c" strokeWidth="2" /></> },
];

function TreeCell({ v, half, h, from }: { v?: boolean; half?: boolean; h?: boolean; from?: boolean }) {
  return (
    <span className="relative h-[22px] w-[26px] shrink-0">
      {v && <span className={`absolute left-[13px] border-l border-dotted border-[#a3a193] ${from ? "top-[11px]" : "top-0"} ${half ? "h-[11px]" : "bottom-0"}`} />}
      {h && <span className="absolute top-[11px] right-0 left-[13px] border-t border-dotted border-[#a3a193]" />}
    </span>
  );
}

function ProjectBrowser() {
  return (
    <aside className="flex w-[305px] shrink-0 flex-col border-l border-[#e6dccb] bg-[#f2f0ec] text-[14px] text-[#2b3834]">
      <h2 className="h-[27px] shrink-0 border-t border-[#d5ccbb] bg-[#e6dccb] pl-1 font-['Noto_Sans',sans-serif] leading-[28px] text-[#4a5652]">Project Browser - Window</h2>
      <ul className="-ml-px flex-1 overflow-hidden font-['Noto_Sans',sans-serif]">
        {TREE.map((n, i) => (
          <li key={i} className="flex h-[22px] items-center whitespace-nowrap">
            {Array.from({ length: n.d }, (_, k) => (
              <TreeCell key={k} v={n.bars ? n.bars[k] : true} />
            ))}
            <span className="relative flex h-[22px] w-[26px] shrink-0">
              <TreeCell v half={n.last} h from={i === 0} />
              {n.box && (
                <button
                  aria-label={n.box === "-" ? `Collapse ${n.t}` : `Expand ${n.t}`}
                  className="absolute top-[5px] left-[7px] flex h-3 w-[13px] items-center justify-center border border-[#8f8e82] bg-[#e9e3d6]"
                >
                  <span className="absolute h-px w-[7px] bg-[#38494f]" />
                  {n.box === "+" && <span className="absolute h-[7px] w-px bg-[#38494f]" />}
                </button>
              )}
            </span>
            {n.d === 0 ? (
              <span className="flex w-[27px] shrink-0 items-center">
                <span className="w-[3px] border-t border-dotted border-[#a3a193]" />
                <Ico s={19} c="text-[#6a736d]">{n.icon}</Ico>
              </span>
            ) : (
              <span className={`shrink-0 border-t border-dotted border-[#a3a193] ${n.d === 1 ? "w-[7px]" : "w-1.5"}`} />
            )}
            <button className={`leading-[22px] ${n.d === 2 ? "px-[3px]" : "px-0.5"} ${n.sel ? "bg-[#ddd4c5] font-bold text-[#121a18]" : ""}`}>{n.t}</button>
          </li>
        ))}
      </ul>
      <div className="h-[3px] shrink-0 bg-[#e6dccb]" />
    </aside>
  );
}

/* ---------- type properties dialog ---------- */

type DGroup = { h: string; bg: string; rows: [string, string][] };
const GROUPS: DGroup[] = [
  { h: "Materials and Finishes", bg: "bg-[#9bb3d1]", rows: [["Fram", "Poplar"], ["Glass", "Glass, Matte"], ["Internal Fram", "Solid Surface Countertop"]] },
  {
    h: "Dimensions",
    bg: "bg-[#9bb3d1]",
    rows: [
      ["EXtension", "185.7"], ["Extension Length", "100.0"], ["Fram Length", "125.0"], ["Fram Tk", "40.0"], ["Height", "2000.0"],
      ["Parpet TK", "127.0"], ["Sub - Height", "1196.2"], ["TK - Fram", "100.0"], ["Width", "1500.0"], ["Rough Width", ""], ["Rough Height", ""],
    ],
  },
  { h: "Analytical Properties", bg: "bg-[#a4a69d]", rows: [["Analytic Construction", "<None>"]] },
];

function DCombo({ label, id }: { label: string; id: string }) {
  return (
    <div className="flex h-[25px] items-center">
      <label htmlFor={id} className="w-[81px] shrink-0">{label}</label>
      <span className="relative h-[25px] flex-1 border border-[#aaa797] bg-[#d9d0c0]">
        <select id={id} className="h-full w-full appearance-none bg-transparent pl-[3px]" defaultValue="w">
          <option value="w">Window Family</option>
        </select>
        <svg width="11" height="7" viewBox="0 0 11 7" className="pointer-events-none absolute top-2 right-1"><path d="M1 1l4.500 4.500L10 1" fill="none" stroke="#5d6864" strokeWidth="1.200" /></svg>
      </span>
    </div>
  );
}

const BTN = "border border-[#aaa797] bg-[#d9d0c0]";

function DashedFrame({ c }: { c: string }) {
  return (
    <svg className={`pointer-events-none absolute ${c}`} aria-hidden="true">
      <rect x="2" y="2" className="[width:calc(100%-4px)] [height:calc(100%-4px)]" fill="none" stroke="#fff" strokeWidth="4" />
      <rect x="2" y="2" className="[width:calc(100%-4px)] [height:calc(100%-4px)]" fill="none" stroke="#ee1c24" strokeWidth="5" strokeDasharray="20 10" strokeDashoffset="10" />
    </svg>
  );
}

function TypeProperties() {
  return (
    <div
      role="dialog"
      aria-label="Type Properties"
      className="absolute top-[200px] left-[330px] flex w-[635px] flex-col border border-[#5a6c66] bg-[#e6decd] text-[12px] text-[#1f2a27] shadow-[2px_6px_18px_rgba(90,75,40,0.5)]"
    >
      <div className="flex h-[37px] items-center justify-between bg-[#f2f0ec] pr-[13px] pb-px pl-[9px]">
        <h2 className="text-[14px]">Type Properties</h2>
        <button aria-label="Close dialog" className="text-[#111]"><Ico s={16} v={16}><path d="M2 2l12 12M14 2L2 14" strokeWidth="1.200" /></Ico></button>
      </div>
      <div className="flex gap-[15px] pt-3.5 pr-[13px] pl-[25px]">
        <div className="flex flex-1 flex-col gap-[15px]">
          <DCombo label="Family:" id="family" />
          <DCombo label="Type:" id="type" />
        </div>
        <div className="flex w-[124px] flex-col gap-2.5 pt-px">
          {["Load...", "Duplicate...", "Rename..."].map((t) => (
            <button key={t} className={`h-7 ${BTN}`}>{t}</button>
          ))}
        </div>
      </div>
      <h3 className="mt-2 ml-[25px] text-[12px] leading-5">Type Parameters</h3>
      <div className="relative mt-[5px] mr-[15px] ml-[25px]">
        <div className="flex h-[462px] overflow-hidden border-t-2 border-r border-b border-l-2 border-t-[#6a706b] border-r-[#f4f0e8] border-b-[#f4f0e8] border-l-[#6a706b] text-[14px]">
          <table className="h-max flex-1 table-fixed border-separate border-spacing-0">
            <colgroup><col className="w-[264px]" /><col /><col className="w-4" /></colgroup>
            <thead>
              <tr className="h-7 text-[#36443f]">
                <th className="border-r-2 border-b-2 border-[#161d1b] pl-1 leading-6 font-normal">Parameter</th>
                <th className="border-r-2 border-b-2 border-[#161d1b] pl-1 leading-6 font-normal">Value</th>
                <th className="border-r-2 border-b-2 border-[#161d1b] pl-0.5 leading-6 font-normal">=</th>
              </tr>
            </thead>
            {GROUPS.map((g, gi) => (
              <tbody key={g.h}>
                <tr className={`h-[29px] ${g.bg}`}>
                  <th colSpan={2} className="pt-[3px] pl-0.5 text-left leading-6 font-bold text-[#0c1214]">{g.h}</th>
                  <td className="pt-1.5 align-top"><button aria-label={`Collapse ${g.h}`} className="ml-0.5 block"><DoubleUp /></button></td>
                </tr>
                {g.rows.map(([n, v]) => (
                  <tr key={n} className={`h-6 align-top ${gi < 2 ? "bg-white" : "bg-[#f2f0ec]"}`}>
                    <th className="border-b border-dotted border-[#666] pl-0.5 text-left leading-[22px] font-normal">{n}</th>
                    <td className={`border-b border-l border-dotted border-[#666] leading-[22px] ${gi < 2 ? "pl-0.5" : "pl-2"}`}>{v}</td>
                    <td className="border-x border-b border-dotted border-[#666] p-px">
                      {gi < 2 && <button aria-label={`Associate ${n}`} className="block h-[21px] w-full border-2 border-[#bdbdbd] bg-[#e1e1e1]" />}
                    </td>
                  </tr>
                ))}
              </tbody>
            ))}
          </table>
          <div className="flex w-[21px] shrink-0 flex-col items-center py-1.5 text-[#4d5a56]">
            <Chevron dir="up" />
            <span className="mt-5 h-[150px] w-[19px] bg-[#c7c0b0]" />
            <span className="flex-1" />
            <Chevron dir="down" />
          </div>
        </div>
        <DashedFrame c="top-[29px] left-[-2px] h-[107px] w-[574px]" />
        <DashedFrame c="top-[156px] left-[-4px] h-[271px] w-[583px]" />
      </div>
      <a href="#what" className="mt-[15px] ml-[25px] self-start leading-5 text-[#4d6676] underline">What do these properties do?</a>
      <div className="mt-5 mb-[15px] flex gap-[9px] pr-[13px] pl-6">
        <button className={`h-7 w-[103px] ${BTN}`}>&lt;&lt; Preview</button>
        <span className="flex-1" />
        <button className="h-7 w-[103px] border-2 border-[#546a78] bg-[#ddd5c5]">OK</button>
        <button className={`h-7 w-[103px] ${BTN}`}>Cancel</button>
        <button disabled className="h-7 w-[103px] border border-[#bcb5a5] bg-[#c9c2b2] text-[#9b998c]">Apply</button>
      </div>
      <span className="absolute right-0 bottom-0.5"><Grip /></span>
    </div>
  );
}

/* ---------- status bar ---------- */

function StatusCombo({ label, text }: { label: string; text: string }) {
  return (
    <label className="relative h-[22px] w-[254px] bg-[#f2f0ec]">
      <select aria-label={label} className="h-full w-full appearance-none bg-transparent pl-0.5 text-[14px] leading-5 text-[#8e8d82]" defaultValue="a">
        <option value="a">{text}</option>
      </select>
      <svg width="10" height="6" viewBox="0 0 10 6" className="pointer-events-none absolute top-2 right-1.5"><path d="M0 0l5 5 5-5" fill="none" stroke="#99978a" /></svg>
      <span className="absolute inset-y-0 right-5 w-px bg-[#dcd6c9]" />
    </label>
  );
}

function StatusBar() {
  return (
    <footer className="flex h-8 shrink-0 items-center bg-[#c7c0b0] pt-px text-[14px] text-[#1f2a27]">
      <p className="w-[689px] pl-0.5">Ready</p>
      <Ico><path d="M1 9l4-2 3 2v10H1zM8 12l3-2 3 2v7H8zM14 8h5v11h-5zM6 5l4-4 5 4-3 4H7z" fill="#98968a" stroke="#e6e1d2" strokeWidth="1" /></Ico>
      <span className="w-2" />
      <StatusCombo label="Active workset" text="" />
      <Ico c="ml-2"><path d="M6 2h12v6h-5l-4 5v6H2v-5l6-2V8H6z" fill="#98968a" stroke="#e6e1d2" strokeWidth="1" /><path d="M7 3h10v4H7z" fill="#c7c0b0" stroke="#e6e1d2" strokeWidth="0.800" /></Ico>
      <span className="ml-1.5 w-[35px]">:0</span>
      <span className="size-5 rounded bg-[#98968a]" />
      <Ico c="ml-2.5"><path d="M1 1h18v18h-6l-4-2-8 1 5-4-4-2z" fill="#98968a" /><path d="M19 3v16h-6M1 13h7l3 3-3 3" stroke="#e6e1d2" strokeWidth="1.200" /></Ico>
      <span className="w-2" />
      <StatusCombo label="Design option" text="Main Model" />
      <div className="ml-auto flex w-[288px] items-center gap-2.5 text-[#e6e1d2]">
        <Ico><path d="M1 3c4-3 6 0 9 0s5-3 9 0v5l-6 3 3 4-3 4-4-3V11L1 8z" fill="#98968a" strokeWidth="0.500" /></Ico>
        <Ico><path d="M1 17L12 3l7-2v18h-5l-2-2z" fill="#98968a" strokeWidth="0.500" /></Ico>
        <Ico><path d="M2 2h12v6l5 9-3 2-4-3-11 1 3-7H2z" fill="#98968a" strokeWidth="0.500" /></Ico>
        <Ico><path d="M2 3l11-2v8l6 7-3 3-4-4-10 4z" fill="#98968a" strokeWidth="0.500" /></Ico>
        <Ico><path d="M6 1v10M1 6h10M3 3l6 6M12 12h3l4 5-4 2z" stroke="#98968a" strokeDasharray="3 1" /></Ico>
        <Ico><circle cx="10" cy="10" r="6" stroke="#98968a" strokeWidth="4" strokeDasharray="3 1.700" /></Ico>
        <span className="flex items-center text-[#3d4b49]">
          <Ico><path d="M1 2h18v3l-7 7v6H8v-6L1 5z" fill="#dcd7c9" strokeWidth="1.800" /></Ico>:1
        </span>
      </div>
    </footer>
  );
}

export default function App() {
  return (
    <div className="relative flex h-screen flex-col overflow-hidden bg-[#c7c0b1] font-['Open_Sans','Noto_Sans',sans-serif]">
      <TitleBar />
      <Tabs />
      <Ribbon />
      <div className="h-[33px] shrink-0 bg-[#e3ddc4] pl-[11px] text-[14px] leading-9 text-[#1d2b27]">Modify | Windows</div>
      <div className="flex min-h-0 flex-1">
        <PropertiesPalette />
        <DrawingArea />
        <ProjectBrowser />
      </div>
      <StatusBar />
      <div className="flex h-[5px] shrink-0 bg-[#15181d]"><span className="ml-[45.1%] w-[61px] bg-[#3a4444]" /></div>
      <TypeProperties />
    </div>
  );
}
